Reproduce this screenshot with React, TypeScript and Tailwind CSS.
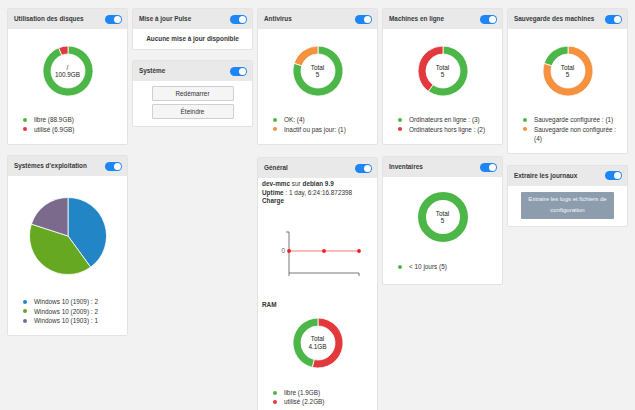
import type { ReactNode } from 'react';

const GREEN = '#4cb748';
const RED = '#e2393d';
const ORANGE = '#f5913f';

type Seg = { value: number; color: string };
type Item = { label: string; dot: string };

const polar = (cx: number, cy: number, r: number, deg: number) => {
  const a = ((deg - 90) * Math.PI) / 180;
  return [cx + r * Math.cos(a), cy + r * Math.sin(a)];
};

const slicePath = (cx: number, cy: number, rO: number, rI: number, a0: number, a1: number) => {
  const large = a1 - a0 > 180 ? 1 : 0;
  const [x0, y0] = polar(cx, cy, rO, a0);
  const [x1, y1] = polar(cx, cy, rO, a1);
  if (rI === 0) return `M${cx} ${cy} L${x0} ${y0} A${rO} ${rO} 0 ${large} 1 ${x1} ${y1} Z`;
  const [x2, y2] = polar(cx, cy, rI, a1);
  const [x3, y3] = polar(cx, cy, rI, a0);
  return `M${x0} ${y0} A${rO} ${rO} 0 ${large} 1 ${x1} ${y1} L${x2} ${y2} A${rI} ${rI} 0 ${large} 0 ${x3} ${y3} Z`;
};

function Slices({ segs, size, rO, rI }: { segs: Seg[]; size: number; rO: number; rI: number }) {
  const c = size / 2;
  const total = segs.reduce((s, x) => s + x.value, 0);
  let acc = 0;
  return (
    <svg width={size} height={size} viewBox={`0 0 ${size} ${size}`}>
      {segs.length === 1 ? (
        <circle cx={c} cy={c} r={(rO + rI) / 2} fill="none" stroke={segs[0].color} strokeWidth={rO - rI} />
      ) : (
        segs.map((s, i) => {
          const a0 = (acc / total) * 360;
          acc += s.value;
          const a1 = (acc / total) * 360;
          return (
            <path key={i} d={slicePath(c, c, rO, rI, a0, a1)} fill={s.color} stroke="#fff" strokeWidth={0.8} />
          );
        })
      )}
    </svg>
  );
}

function Donut({ segs, top, bottom }: { segs: Seg[]; top: string; bottom: string }) {
  return (
    <div className="relative w-[52px] h-[52px]">
      <Slices segs={segs} size={52} rO={25} rI={17} />
      <div className="absolute inset-0 flex flex-col items-center justify-center text-[6.4px] leading-[7.5px] text-[#222]">
        <span>{top}</span>
        <span>{bottom}</span>
      </div>
    </div>
  );
}

function Legend({ items, className = '' }: { items: Item[]; className?: string }) {
  return (
    <ul className={`pl-[15px] pr-[8px] leading-[9.5px] ${className}`}>
      {items.map((it) => (
        <li key={it.label} className="flex items-start">
          <span className={`w-[4px] h-[4px] rounded-full shrink-0 mt-[2.75px] mr-[7px] ${it.dot}`} />
          <span>{it.label}</span>
        </li>
      ))}
    </ul>
  );
}

function Toggle() {
  return (
    <div className="w-[17px] h-[9px] rounded-full bg-[#1d86f4] flex items-center justify-end pr-[1px]">
      <div className="w-[7px] h-[7px] rounded-full bg-white" />
    </div>
  );
}

function Panel({ title, children }: { title: string; children: ReactNode }) {
  return (
    <div className="bg-white border border-[#e3e3e3] rounded-[2px] overflow-hidden">
      <div className="h-[20px] bg-[#e9e9e9] flex items-center justify-between pl-[6px] pr-[5px] font-bold text-[#383838]">
        <span>{title}</span>
        <Toggle />
      </div>
      {children}
    </div>
  );
}

function DonutPanel({ title, segs, top, bottom, items, pb = 'pb-[10px]' }: {
  title: string; segs: Seg[]; top: string; bottom: string; items: Item[]; pb?: string;
}) {
  return (
    <Panel title={title}>
      <div className="h-[84px] flex items-center justify-center">
        <Donut segs={segs} top={top} bottom={bottom} />
      </div>
      <Legend items={items} className={`mt-[2px] ${pb}`} />
    </Panel>
  );
}

function LoadChart() {
  return (
    <svg width={118} height={95} viewBox="0 0 118 95" className="block">
      <line x1={31} y1={26} x2={31} y2={70} stroke="#555" strokeWidth={0.8} />
      <line x1={28} y1={26} x2={31} y2={26} stroke="#555" strokeWidth={0.8} />
      <line x1={31} y1={67} x2={101} y2={67} stroke="#555" strokeWidth={0.8} />
      <line x1={101} y1={67} x2={101} y2={70} stroke="#555" strokeWidth={0.8} />
      <line x1={31} y1={45} x2={101} y2={45} stroke="#f25555" strokeWidth={0.8} />
      {[31, 66, 101].map((x) => (
        <circle key={x} cx={x} cy={45} r={1.9} fill="#f01c1c" />
      ))}
      <text x={27} y={47.2} textAnchor="end" fontSize={6.4} fill="#555" fontFamily="Liberation Sans, Arial, sans-serif">0</text>
    </svg>
  );
}

export default function App() {
  return (
    <div className="min-h-screen bg-[#f2f2f2] font-['Liberation_Sans',Arial,sans-serif] text-[6.4px] text-[#333] flex items-start gap-[4px] pl-[7px] pt-[8px]">
      <div className="w-[121px] flex flex-col gap-[10px]">
        <DonutPanel
          title="Utilisation des disques"
          segs={[{ value: 94, color: GREEN }, { value: 6, color: RED }]}
          top="/"
          bottom="100.9GB"
          items={[{ label: 'libre (88.9GB)', dot: 'bg-[#4cb748]' }, { label: 'utilisé (6.9GB)', dot: 'bg-[#e2393d]' }]}
        />
        <Panel title="Systèmes d'exploitation">
          <div className="h-[120px] flex items-center justify-center">
            <Slices
              segs={[{ value: 2, color: '#2185c6' }, { value: 2, color: '#66a821' }, { value: 1, color: '#7b6a8b' }]}
              size={78}
              rO={38.5}
              rI={0}
            />
          </div>
          <Legend
            className="mt-[1px] pb-[9px]"
            items={[
              { label: 'Windows 10 (1909) : 2', dot: 'bg-[#2185c6]' },
              { label: 'Windows 10 (2009) : 2', dot: 'bg-[#66a821]' },
              { label: 'Windows 10 (1903) : 1', dot: 'bg-[#7b6a8b]' },
            ]}
          />
        </Panel>
      </div>

      <div className="w-[121px] flex flex-col gap-[10px]">
        <Panel title="Mise à jour Pulse">
          <div className="h-[20px] flex items-center justify-center font-bold text-[#383838]">Aucune mise à jour disponible</div>
        </Panel>
        <Panel title="Système">
          <div className="flex flex-col items-center gap-[3px] pt-[5px] pb-[7px]">
            <button className="w-[82px] h-[15px] bg-[#f5f5f5] border border-[#cfcfcf] rounded-[1px] text-[6.4px] text-[#333]">Redémarrer</button>
            <button className="w-[82px] h-[15px] bg-[#f5f5f5] border border-[#cfcfcf] rounded-[1px] text-[6.4px] text-[#333]">Éteindre</button>
          </div>
        </Panel>
      </div>

      <div className="w-[121px] flex flex-col gap-[12px]">
        <DonutPanel
          title="Antivirus"
          segs={[{ value: 4, color: GREEN }, { value: 1, color: ORANGE }]}
          top="Total"
          bottom="5"
          items={[{ label: 'OK: (4)', dot: 'bg-[#4cb748]' }, { label: 'Inactif ou pas jour: (1)', dot: 'bg-[#f5913f]' }]}
        />
        <Panel title="Général">
          <div className="pl-[4px] pt-[2px] leading-[8.5px]">
            <div><b>dev-mmc</b> sur <b>debian 9.9</b></div>
            <div><b>Uptime</b> : 1 day, 6:24:16.872398</div>
            <div className="font-bold">Charge</div>
          </div>
          <LoadChart />
          <div className="pl-[4px] leading-[8.5px] font-bold">RAM</div>
          <div className="h-[67px] flex items-center justify-center">
            <Donut segs={[{ value: 2.2, color: RED }, { value: 1.9, color: GREEN }]} top="Total" bottom="4.1GB" />
          </div>
          <Legend
            className="mt-[12px] pb-[10px] leading-[9px]"
            items={[{ label: 'libre (1.9GB)', dot: 'bg-[#4cb748]' }, { label: 'utilisé (2.2GB)', dot: 'bg-[#e2393d]' }]}
          />
        </Panel>
      </div>

      <div className="w-[121px] flex flex-col gap-[11px]">
        <DonutPanel
          title="Machines en ligne"
          segs={[{ value: 3, color: GREEN }, { value: 2, color: RED }]}
          top="Total"
          bottom="5"
          items={[
            { label: 'Ordinateurs en ligne : (3)', dot: 'bg-[#4cb748]' },
            { label: 'Ordinateurs hors ligne : (2)', dot: 'bg-[#e2393d]' },
          ]}
        />
        <Panel title="Inventaires">
          <div className="h-[80px] flex items-center justify-center">
            <Donut segs={[{ value: 5, color: GREEN }]} top="Total" bottom="5" />
          </div>
          <Legend className="mt-[5px] pb-[12px]" items={[{ label: '< 10 jours (5)', dot: 'bg-[#4cb748]' }]} />
        </Panel>
      </div>

      <div className="w-[121px] flex flex-col gap-[11px]">
        <DonutPanel
          title="Sauvegarde des machines"
          segs={[{ value: 4, color: ORANGE }, { value: 1, color: GREEN }]}
          top="Total"
          bottom="5"
          pb="pb-[9px]"
          items={[
            { label: 'Sauvegarde configurée : (1)', dot: 'bg-[#4cb748]' },
            { label: 'Sauvegarde non configurée : (4)', dot: 'bg-[#f5913f]' },
          ]}
        />
        <Panel title="Extraire les journaux">
          <div className="pt-[6px] pb-[7px] flex justify-center">
            <button className="w-[93px] h-[27px] bg-[#8d9dae] rounded-[1px] text-[6px] leading-[11px] text-white/90 px-[4px]">
              Extraire les logs et fichiers de configuration
            </button>
          </div>
        </Panel>
      </div>
    </div>
  );
}
